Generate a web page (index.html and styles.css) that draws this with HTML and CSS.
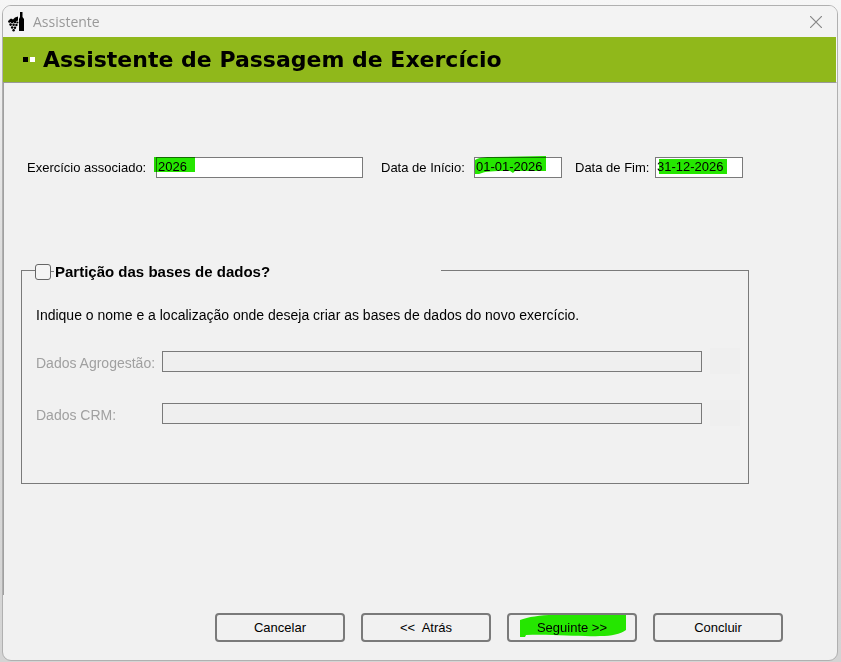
FILE: index.html
```
<!DOCTYPE html>
<html lang="pt">
  <head>
    <meta charset="UTF-8" />
    <meta name="viewport" content="width=device-width, initial-scale=1.0" />
    <title>Assistente</title>
    <link rel="stylesheet" href="styles.css">
  </head>
  <body>
    <div class="window">
      <!-- Title bar -->
      <header class="title-bar">
        <svg class="app-icon" width="16" height="20" viewBox="0 0 16 20" aria-hidden="true">
          <path d="M12 0h2.500v5l1.500 2v12h-5V7l1-2z" />
          <path d="M1 8l2-1.500 2 1 2-2 3-1v4l-3 1.500-5 0z" />
          <circle cx="1.4" cy="9.500" r="1.300" />
          <circle cx="4.2" cy="10" r="1.300" />
          <circle cx="7" cy="10" r="1.300" />
          <circle cx="9.4" cy="10.500" r="1.100" />
          <circle cx="2.6" cy="12.600" r="1.300" />
          <circle cx="5.6" cy="12.800" r="1.300" />
          <circle cx="8.4" cy="13" r="1.200" />
          <circle cx="4.2" cy="15.500" r="1.300" />
          <circle cx="7" cy="15.700" r="1.200" />
          <circle cx="5.6" cy="18.200" r="1.200" />
        </svg>
        <span class="window-name">Assistente</span>
        <button type="button" class="close-btn" aria-label="Fechar">
          <svg width="12" height="12" viewBox="0 0 12 12">
            <path d="M0 0L12 12M12 0L0 12" />
          </svg>
        </button>
      </header>

      <div class="banner">
        <span class="square black"></span>
        <span class="square white"></span>
        <h1>Assistente de Passagem de Exercício</h1>
      </div>

      <form class="wizard">
        <div class="panel">
          <!-- Fiscal year and dates -->
          <div class="year-row">
            <label class="label-year" for="exercicio">Exercício associado:</label>
            <div class="field field-year">
              <input type="text" id="exercicio" value="2026" />
              <svg class="marker" width="42" height="17" viewBox="0 0 42 17">
                <path d="M0 1H41V16H0z" />
              </svg>
            </div>

            <label class="label-start" for="inicio">Data de Início:</label>
            <div class="field field-date">
              <input type="text" id="inicio" value="01-01-2026" />
              <svg class="marker" width="74" height="19" viewBox="0 0 74 19">
                <path d="M3 4C8 1 14 1 20 1L74 0V15H43L41 17L38 15C28 15 15 15 10 17L7 18H3z" />
              </svg>
            </div>

            <label class="label-end" for="fim">Data de Fim:</label>
            <div class="field field-date">
              <input type="text" id="fim" value="31-12-2026" />
              <svg class="marker" width="74" height="19" viewBox="0 0 74 19">
                <path d="M6 3L74 3V18H6z" />
              </svg>
            </div>
          </div>

          <!-- Database split -->
          <fieldset class="split-box">
            <legend>
              <input type="checkbox" id="particao" />
              <label for="particao">Partição das bases de dados?</label>
            </legend>
            <p>Indique o nome e a localização onde deseja criar as bases de dados do novo exercício.</p>
            <div class="path-row">
              <label for="agrogestao">Dados Agrogestão:</label>
              <input type="text" id="agrogestao" disabled />
              <button type="button" class="browse-btn" aria-label="Procurar Agrogestão" disabled></button>
            </div>
            <div class="path-row">
              <label for="crm">Dados CRM:</label>
              <input type="text" id="crm" disabled />
              <button type="button" class="browse-btn" aria-label="Procurar CRM" disabled></button>
            </div>
          </fieldset>
        </div>

        <!-- Wizard buttons -->
        <div class="actions">
          <button type="button" class="btn">Cancelar</button>
          <button type="button" class="btn">&lt;&lt;&nbsp; Atrás</button>
          <button type="button" class="btn btn-next">
            <svg class="stroke" width="106" height="23" viewBox="0 0 106 23">
              <path d="M0 5C8 2 20 0 34 0H106V15C100 19 92 21 80 21C60 22 35 19 6 20L5 22H0z" />
            </svg>
            <span>Seguinte &gt;&gt;</span>
          </button>
          <button type="button" class="btn">Concluir</button>
        </div>
      </form>
    </div>
  </body>
</html>
```
FILE: styles.css
```
* {
  box-sizing: border-box;
}

body {
  margin: 0;
  padding: 5px 3px 1px 2px;
  min-height: 100vh;
  display: flex;
  background: linear-gradient(#f6f6f6, #dcdcdc 40%, #d4d4d4);
  font-family: "Liberation Sans", Arial, sans-serif;
  font-size: 13px;
  line-height: 16px;
  color: #000;
}

input,
button {
  font: inherit;
  color: inherit;
  margin: 0;
}

.window {
  flex: 1;
  display: flex;
  flex-direction: column;
  background-color: #f1f1f1;
  border: 1px solid #b0b0b0;
  border-radius: 9px;
  overflow: hidden;
}

/* Title bar */
.title-bar {
  display: flex;
  align-items: center;
  height: 31px;
  padding: 0 15px 0 5px;
  background-color: #f3f3f3;
}

.window-name {
  flex: 1;
  margin-left: 9px;
  font-family: "Open Sans", "Segoe UI", sans-serif;
  font-size: 14px;
  color: #999;
}

.close-btn {
  display: flex;
  padding: 0;
  border: none;
  background: none;
}

.close-btn path {
  stroke: #888;
  stroke-width: 1.2;
  fill: none;
}

.banner {
  display: flex;
  align-items: center;
  gap: 2px;
  height: 46px;
  padding-left: 20px;
  background-color: #90b81b;
  border-right: 1px solid #f8f8f8;
  border-bottom: 1px solid #999;
}

.banner h1 {
  margin: 0 0 0 6px;
  font-family: "DejaVu Sans", Verdana, sans-serif;
  font-size: 22px;
  line-height: 26px;
  font-weight: bold;
}

.square {
  width: 5px;
  height: 5px;
}

.black {
  background-color: #000;
}

.white {
  background-color: #fff;
}

.wizard {
  flex: 1;
  display: flex;
  flex-direction: column;
}

.panel {
  flex: 1;
  padding: 74px 88px 0 17px;
  border-left: 1px solid #a0a0a0;
}

/* Fiscal year and dates */
.year-row {
  display: flex;
  align-items: center;
  padding: 0 6px;
}

.label-year {
  min-width: 125px;
}

.label-start {
  min-width: 85px;
}

.label-end {
  min-width: 76px;
}

.field {
  position: relative;
  margin: 0 18px 0 4px;
}

.field-year {
  flex: 1;
}

.field-date {
  width: 88px;
  margin: 0 13px 0 8px;
}

.field-date:last-child {
  margin: 0 0 0 4px;
}

.field input,
.path-row input {
  display: block;
  width: 100%;
  height: 21px;
  padding: 0 1px 2px;
  border: 1px solid #7a7a7a;
  border-radius: 0;
  background-color: #fff;
}

.marker {
  position: absolute;
  top: -1px;
  left: -2px;
  fill: #25e600;
  mix-blend-mode: multiply;
  pointer-events: none;
}

/* Database split */
.split-box {
  min-width: 0;
  height: 223px;
  margin: 83px 0 0;
  padding: 27px 8px 0 14px;
  border: 1px solid #7a7a7a;
  font-size: 14px;
}

.split-box legend {
  display: flex;
  align-items: center;
  width: 406px;
  margin-left: -1px;
  padding: 3px 0 0;
  font-size: 15px;
  font-weight: bold;
}

.split-box legend::after {
  content: "";
  order: 1;
  width: 3px;
  height: 1px;
  margin-bottom: 2px;
  background-color: #7a7a7a;
}

.split-box legend label {
  order: 2;
  margin-left: 1px;
}

.split-box input[type="checkbox"] {
  appearance: none;
  width: 16px;
  height: 16px;
  border: 1px solid #666;
  border-radius: 3px;
  background-color: #f5f5f5;
}

.split-box p {
  margin: 0 0 25px;
}

.path-row {
  display: flex;
  align-items: center;
  height: 26px;
  margin-bottom: 26px;
}

.path-row label {
  width: 126px;
  padding-top: 3px;
  color: #a0a0a0;
}

.path-row input {
  flex: 1;
  width: auto;
  background-color: #efefef;
}

.browse-btn {
  width: 30px;
  height: 26px;
  margin-left: 8px;
  border: none;
  background-color: #efefef;
}

/* Wizard buttons */
.actions {
  display: flex;
  justify-content: flex-end;
  gap: 16px;
  padding: 18px 54px 18px 0;
}

.btn {
  position: relative;
  width: 130px;
  height: 29px;
  padding: 0;
  border: 2px solid #7a7a7a;
  border-radius: 4px;
  background-color: #f1f1f1;
}

.btn span {
  position: relative;
}

.stroke {
  position: absolute;
  top: 0;
  left: 11px;
  fill: #25e600;
}
```
